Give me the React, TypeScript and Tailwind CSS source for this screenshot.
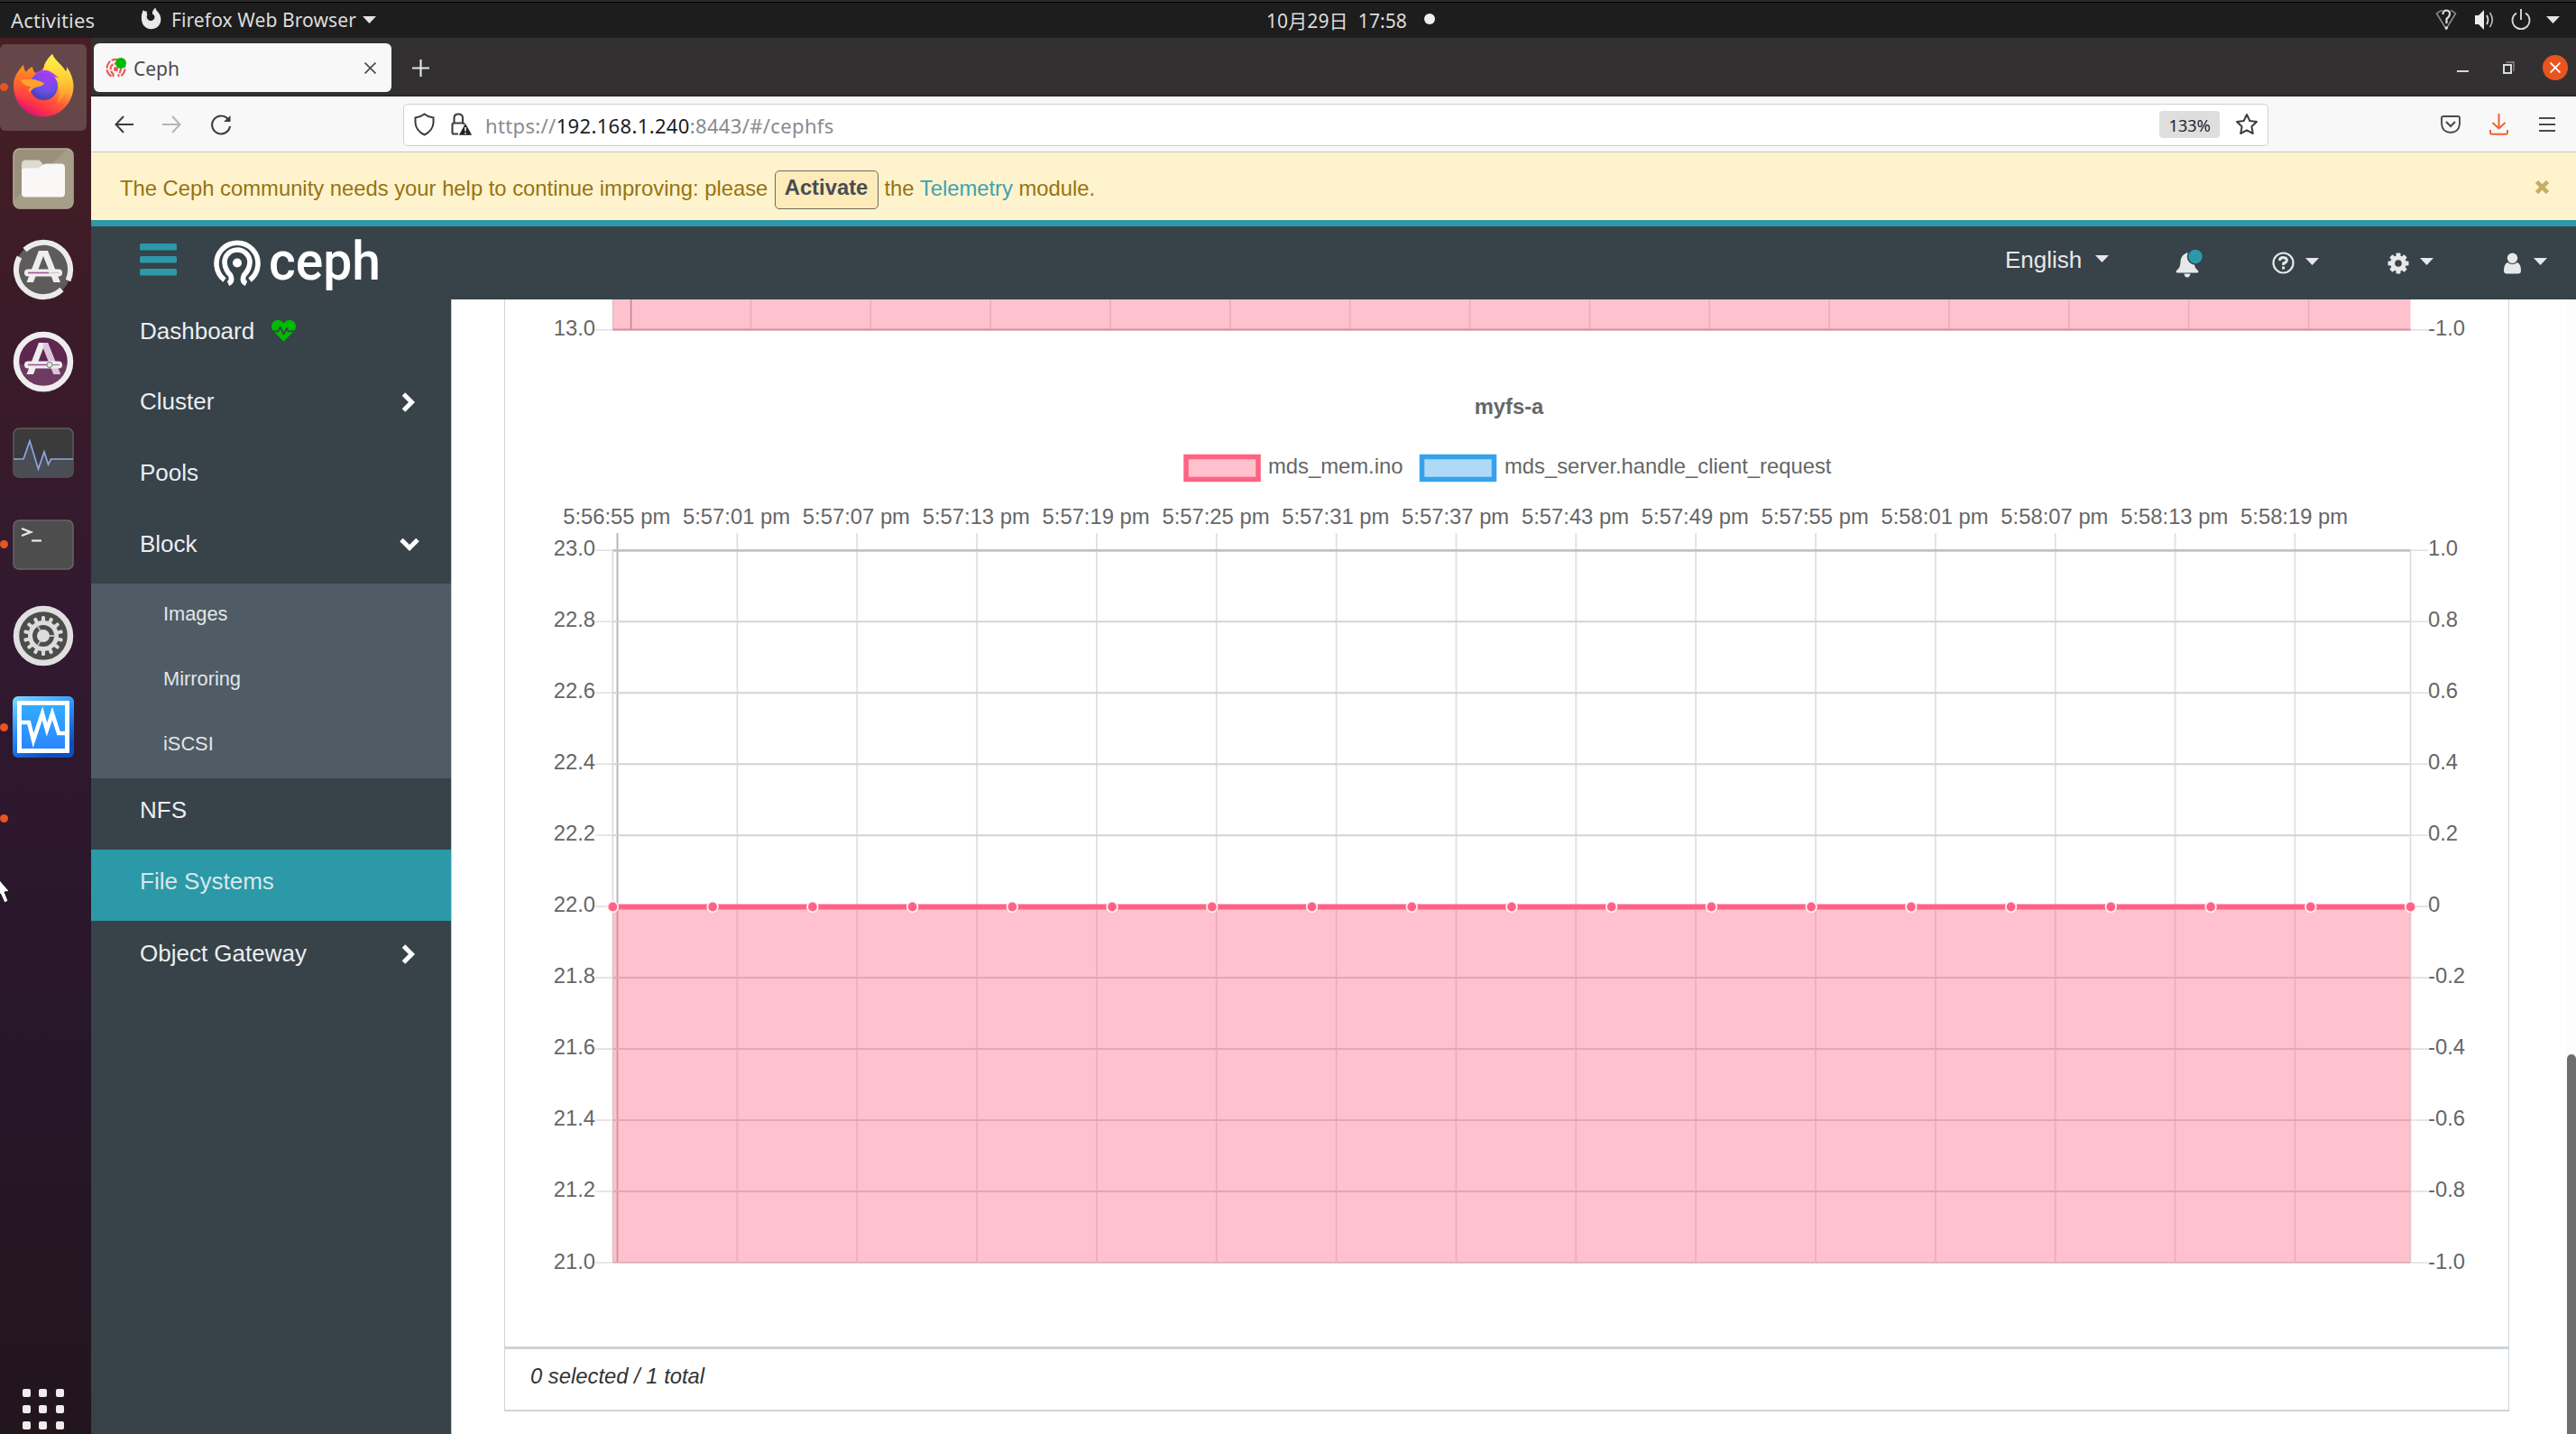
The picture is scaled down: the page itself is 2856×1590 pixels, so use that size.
import React from "react";
import { FaHeartbeat } from "react-icons/fa";

const UI = "font-['Noto_Sans','Noto_Sans_CJK_SC',sans-serif]";

function Caret({ className = "" }: { className?: string }) {
  return (
    <svg className={"shrink-0 " + className} width="15" height="8" viewBox="0 0 15 8">
      <path d="M0 0H15L7.5 8Z" fill="currentColor" />
    </svg>
  );
}

function TopBar() {
  return (
    <div className={"flex h-[42px] shrink-0 items-center border-t-2 border-[#2b2b2d] bg-[#1d1d1d] text-[21px] leading-none text-[#dcdcdc] shadow-[inset_0_1px_0_#000] " + UI}>
      <span className="ml-[12px] w-[143px] shrink-0 whitespace-nowrap text-[22px] tracking-[0.15px]">Activities</span>
      <svg className="mb-0.5 shrink-0" width="26" height="26" viewBox="0 0 26 26">
        <path d="M4 3C5 5 6.500 4.500 8 4.500C7.500 6 7.500 7 8.500 8C7 9.500 7.500 13 10 14.500C13 16 16.500 14 16.500 11C16.500 9 15 8 14 7.500C13.500 5 15 2 17.500 0.500C17.500 3 19 4 21 6.500C24.500 11 24 18 20 21.500C15.500 25.500 8 25 4.500 20.500C1 16 1 8 4 3Z" fill="#e9e9e9" />
      </svg>
      <span className="ml-[9px] w-[214px] shrink-0 whitespace-nowrap tracking-[0.1px]">Firefox Web Browser</span>
      <Caret className="-ml-0.5 mr-0.5 text-[#e4e4e4]" />
      <span className="ml-[985px] w-[175px] shrink-0 whitespace-pre pt-[3px] tracking-[0.1px]">10月29日  17:58</span>
      <span className="mb-0.5 size-[12px] shrink-0 rounded-full bg-[#efefef]" />
      <div className="ml-auto mr-[18px] flex items-center">
        <svg width="24" height="28" viewBox="0 0 24 28" fill="none" stroke="#8b8b8b" strokeWidth="1.6">
          <path d="M8 3.500Q4 4.500 1.500 7L12 24L22.500 7Q20 4.500 17 3.500" />
          <path d="M8.500 8Q8.500 3.500 12.500 3.500Q16.500 4 16 8Q15.500 11 12.500 13V18" stroke="#dedede" strokeWidth="2.200" />
          <circle cx="12.300" cy="23" r="1.700" fill="#dedede" stroke="none" />
        </svg>
        <svg className="ml-[19px]" width="24" height="28" viewBox="0 0 24 28" fill="none" stroke="#bdbdbd" strokeWidth="1.6">
          <path d="M1 9H5L11 3V25L5 19H1Z" fill="#ececec" stroke="none" />
          <path d="M14 9Q17 14 14 19" stroke="#ececec" />
          <path d="M17.500 6Q23 14 17.500 22" />
        </svg>
        <svg className="ml-[16px]" width="24" height="28" viewBox="0 0 24 28" fill="none" stroke="#d6d6d6" strokeWidth="1.900">
          <path d="M7 6.500A9.500 9.500 0 1 0 17 6.500M12 2V14" />
        </svg>
        <Caret className="ml-[16px] text-[#e4e4e4]" />
      </div>
    </div>
  );
}

function FirefoxIcon() {
  return (
    <svg className="-mt-1" width="70" height="72" viewBox="0 0 70 72">
      <defs>
        <linearGradient id="ffBody" x1="0.8" y1="0.1" x2="0.3" y2="1">
          <stop offset="0" stopColor="#fff04a" />
          <stop offset="0.35" stopColor="#ffb02e" />
          <stop offset="0.6" stopColor="#ff5a3a" />
          <stop offset="0.8" stopColor="#ff3347" />
          <stop offset="1" stopColor="#d8107c" />
        </linearGradient>
        <linearGradient id="ffLeft" x1="0.4" y1="0" x2="0.4" y2="1">
          <stop offset="0" stopColor="#ff9a1f" />
          <stop offset="0.5" stopColor="#ff5b33" />
          <stop offset="1" stopColor="#ff3347" stopOpacity="0" />
        </linearGradient>
        <linearGradient id="ffTail" x1="0.5" y1="0" x2="0.5" y2="1">
          <stop offset="0" stopColor="#fff44f" />
          <stop offset="0.5" stopColor="#ffcf35" />
          <stop offset="1" stopColor="#ff8a2a" />
        </linearGradient>
        <radialGradient id="ffGlobe" cx="0.6" cy="0.2" r="0.9">
          <stop offset="0" stopColor="#a13df0" />
          <stop offset="0.55" stopColor="#6a4fe8" />
          <stop offset="1" stopColor="#3b3a9c" />
        </radialGradient>
      </defs>
      <path d="M2 36C2 26 7 20 13 13C13 17 14 19 16 21C18 18 21 16 23 15C23 18 24 20 26 22C34 20 36 17 36 13C38 8 42 4 45 1C47 7 53 11 58 17L60 20C61 19 61 17 61 15C66 22 68.500 30 68.500 37C68 56 53 70.500 35 70.500C16 70.500 2 55 2 36Z" fill="url(#ffBody)" />
      <path d="M2 36C2 26 7 20 13 13C13 17 14 19 16 21C18 18 21 16 23 15C23 18 24 20 26 22L30 24L24 60C10 56 2 48 2 36Z" fill="url(#ffLeft)" />
      <path d="M34 21C36 14 39 6 45 1C47 8 58 13 60 24C63 34 61 48 50 56C56 46 53 33 46 26C42 22 39 21 34 21Z" fill="url(#ffTail)" />
      <circle cx="35.500" cy="36.500" r="15.500" fill="url(#ffGlobe)" />
      <path d="M25 24C28 20 35 17 42 20C46 22 50 25 52 28C47 25 43 27 42 24C37 20 31 23 25 24Z" fill="#b13df2" />
      <path d="M10 30C15 28 19 29 23 29C27 29 30 31 36 33C35 37 29 37 26 38C23 40 21 41 20 44C18 41 19 39 21 37C16 37 12 34 10 30Z" fill="#ffa22b" />
    </svg>
  );
}

function FilesIcon() {
  return (
    <svg width="68" height="68" viewBox="0 0 68 68">
      <rect x="1" y="1" width="66" height="66" rx="7" fill="#9a917c" stroke="#b5ad98" strokeWidth="1.500" />
      <path d="M1 58L60 2Q67 2 67 8V60Q67 67 60 67H8Q1 67 1 58Z" fill="#a79e8a" />
      <path d="M10 18Q10 13.500 14.500 13.500H28Q31 13.500 33 18V30H10Z" fill="#dedacf" />
      <path d="M10 25Q10 22.500 14 22.500H27Q30 22 32 20Q33.500 17.500 37 17.500H54Q58 17.500 58 22V50Q58 54.500 54 54.500H14Q10 54.500 10 50Z" fill="#f9f8f6" />
    </svg>
  );
}

function AppCircle({ update }: { update?: boolean }) {
  return (
    <svg width="68" height="68" viewBox="0 0 68 68">
      <circle cx="34" cy="34" r={update ? 31 : 33} fill={update ? "#5d5b5c" : "#5f2650"} />
      {!update && <path d="M3 37H65A31 31 0 0 1 3 37Z" fill="#6f3a62" />}
      {update ? (
        <g fill="none" stroke="#ebebeb" strokeWidth="6">
          <path d="M13.500 12A30 30 0 0 1 61.500 46" />
          <path d="M54.500 56A30 30 0 0 1 7.500 20" />
        </g>
      ) : (
        <circle cx="34" cy="34" r="30" fill="none" stroke="#efeeee" strokeWidth="6.500" />
      )}
      <path d="M29 13H39L53 48H45.500L34 19L23 48H15.500Z" fill="#efeeee" />
      {!update && <path d="M34 13H39L53 48H45.500L34 19Z" fill="#dcc3dc" />}
      <rect x="13" y="33.500" width="42" height="8" rx="4" fill="#efeeee" />
      <path d="M17 37.500H40" stroke="#a34f9a" strokeWidth="1.600" />
      <path d="M40 37.500H52" stroke={update ? "#c9c9c9" : "#8a8a8a"} strokeWidth="1.200" />
      {!update && <circle cx="41" cy="37.500" r="3" fill="#e6e6e6" stroke="#777" strokeWidth="1" />}
    </svg>
  );
}

function MonitorIcon() {
  return (
    <svg width="68" height="56" viewBox="0 0 68 56">
      <rect x="1" y="1" width="66" height="54" rx="6" fill="#3b3b3b" stroke="#5c5c5c" strokeWidth="1.500" />
      <path d="M1 35H12L19 15L28.500 46L35 27L39.500 41L42.500 35H67V49Q67 55 61 55H7Q1 55 1 49Z" fill="#4b4d55" />
      <path d="M1 35H12L19 15L28.500 46L35 27L39.500 41L42.500 35H67" fill="none" stroke="#8ea6e2" strokeWidth="1.700" />
    </svg>
  );
}

function TerminalIcon() {
  return (
    <svg width="68" height="56" viewBox="0 0 68 56">
      <rect x="1" y="1" width="66" height="54" rx="6" fill="#4d4d4d" stroke="#666" strokeWidth="1.500" />
      <path d="M10 10L20 14L10 18" fill="none" stroke="#e8e8e8" strokeWidth="2.400" />
      <path d="M21 23.500H32" stroke="#e8e8e8" strokeWidth="2.200" />
    </svg>
  );
}

function SettingsIcon() {
  const teeth = Array.from({ length: 14 }, (_, i) => i * (360 / 14));
  return (
    <svg width="68" height="68" viewBox="0 0 68 68">
      <circle cx="34" cy="34" r="30" fill="#4c4c4b" stroke="#e0e0e0" strokeWidth="6.500" />
      {teeth.map((a) => (
        <rect key={a} x="32" y="12" width="4" height="6" rx="1.500" fill="#dcdcdc" transform={`rotate(${a} 34 34)`} />
      ))}
      <circle cx="34" cy="34" r="14.500" fill="none" stroke="#dcdcdc" strokeWidth="5" />
      <path d="M34 34H47M34 34L27.500 22.700M34 34L27.500 45.300" stroke="#bdbdbd" strokeWidth="1.800" />
      <circle cx="34" cy="34" r="7" fill="#dcdcdc" />
    </svg>
  );
}

function VmIcon() {
  return (
    <svg width="70" height="70" viewBox="0 0 70 70">
      <defs>
        <linearGradient id="vmBorder" x1="0" y1="0" x2="0.5" y2="1">
          <stop offset="0" stopColor="#7fdcff" />
          <stop offset="0.5" stopColor="#2a92ff" />
          <stop offset="1" stopColor="#0b4fc0" />
        </linearGradient>
        <linearGradient id="vmFill" x1="0" y1="0" x2="0" y2="1">
          <stop offset="0" stopColor="#30adff" />
          <stop offset="1" stopColor="#2a84ff" />
        </linearGradient>
      </defs>
      <rect x="1" y="1" width="68" height="68" rx="6" fill="url(#vmBorder)" />
      <rect x="8.500" y="8.500" width="53" height="53" fill="url(#vmFill)" stroke="#fff" strokeWidth="5" />
      <path d="M10 30H19L24 50L34 20L39 38L45 20L52 42H60" fill="none" stroke="#fff" strokeWidth="4.500" />
    </svg>
  );
}

const DOCK: { icon: React.ReactNode; dot?: boolean; active?: boolean }[] = [
  { icon: <FirefoxIcon />, dot: true, active: true },
  { icon: <FilesIcon /> },
  { icon: <AppCircle update /> },
  { icon: <AppCircle /> },
  { icon: <MonitorIcon /> },
  { icon: <TerminalIcon />, dot: true },
  { icon: <SettingsIcon /> },
  { icon: <VmIcon />, dot: true },
  { icon: null, dot: true },
];

function Dock() {
  return (
    <div className="relative flex w-[101px] shrink-0 flex-col bg-[linear-gradient(#471f25,#3c1b27_18%,#321930_42%,#28162a_70%,#22151e)] pt-[4px]">
      {DOCK.map((d, i) => (
        <div key={i} className="flex h-[101.4px] shrink-0 items-center">
          <div className={"relative flex h-[96px] w-[95.5px] items-center justify-center rounded-[6px] " + (d.active ? "bg-[#65474a]" : "")}>
            {d.dot && <span className="absolute left-0 top-[43.500px] size-[9px] rounded-full bg-[#e95420]" />}
            {d.icon}
          </div>
        </div>
      ))}
      <div className="mb-[5px] ml-[25px] mt-auto grid w-[46px] grid-cols-3 gap-[9px]">
        {Array.from({ length: 9 }, (_, i) => (
          <span key={i} className="size-[9px] rounded-[2px] bg-[#efedec]" />
        ))}
      </div>
      <svg className="absolute left-0 top-[933px]" width="14" height="30" viewBox="0 0 14 30">
        <path d="M-8 -8L10.500 13.500L5 14L9 24L5 26L0.500 16L-4 19Z" fill="#fff" stroke="#111" strokeWidth="1" />
      </svg>
    </div>
  );
}

function TabStrip() {
  return (
    <div className={"flex h-[65px] shrink-0 items-center border-b-2 border-[#2a2829] bg-[#333031] " + UI}>
      <div className="ml-[3px] mt-[3px] flex h-[54px] w-[330px] shrink-0 items-center rounded-[6px] bg-[#f8f8f8]">
        <svg className="ml-[13px]" width="23" height="23" viewBox="0 0 23 23" fill="none" stroke="#ee5a57" strokeWidth="2.200">
          <path d="M6.500 20.500A10 10 0 1 1 16.500 20.500" strokeDasharray="9 1.500" />
          <path d="M8.500 21V18Q4.500 14.500 6 10Q8 6 12 6.500Q17.500 8 17 12.500Q16.500 16 14.500 18V21" strokeDasharray="7 1.500" />
          <circle cx="11.500" cy="12.500" r="1.500" fill="#ee5a57" />
          <circle cx="17" cy="6" r="6" fill="#00bb00" stroke="none" />
        </svg>
        <span className="ml-[8px] pt-[2px] text-[21px] leading-none text-[#4a4a4a]">Ceph</span>
        <svg className="ml-auto mr-[17px]" width="13" height="13" viewBox="0 0 12 12" stroke="#4a4a4a" strokeWidth="1.500">
          <path d="M0.500 0.500L11.500 11.500M11.500 0.500L0.500 11.500" />
        </svg>
      </div>
      <svg className="ml-[23px] mt-[3px]" width="19" height="19" viewBox="0 0 18 18" stroke="#e6e6e6" strokeWidth="2">
        <path d="M0 9H18M9 0V18" />
      </svg>
      <div className="ml-auto mr-[9px] mt-[2px] flex items-center">
        <span className="mt-[8px] h-[2px] w-[13px] bg-[#d8d8d8]" />
        <svg className="ml-[38px]" width="13" height="14" viewBox="0 0 13 14" fill="none">
          <path d="M3.500 1H12V11" stroke="#8d8d8d" strokeWidth="1.300" />
          <rect x="1" y="4" width="8" height="9" stroke="#e4e4e4" strokeWidth="1.900" />
        </svg>
        <span className="ml-[31px] flex size-[28px] items-center justify-center rounded-full bg-[#e95420]">
          <svg width="12" height="12" viewBox="0 0 12 12" stroke="#fff" strokeWidth="1.900">
            <path d="M0.500 0.500L11.500 11.500M11.500 0.500L0.500 11.500" />
          </svg>
        </span>
      </div>
    </div>
  );
}

function Toolbar() {
  return (
    <div className={"flex h-[62px] shrink-0 items-center border-b-[1.500px] border-[#c6c6c8] bg-[#f8f8f8] pt-px " + UI}>
      <svg className="ml-[26px] shrink-0" width="21" height="20" viewBox="0 0 21 20" fill="none" stroke="#3d3d3d" strokeWidth="2">
        <path d="M21 10H1.500M10 1L1.500 10L10 19" />
      </svg>
      <svg className="ml-[32px] shrink-0" width="21" height="20" viewBox="0 0 21 20" fill="none" stroke="#b4b4b4" strokeWidth="2">
        <path d="M0 10H19.500M11 1L19.500 10L11 19" />
      </svg>
      <svg className="ml-[33px] shrink-0" width="23" height="23" viewBox="0 0 23 23" fill="none" stroke="#3d3d3d" strokeWidth="2.100">
        <path d="M19.500 6A10 10 0 1 0 21 13" />
        <path d="M21.500 1V8H14Z" fill="#3d3d3d" stroke="none" />
      </svg>
      <div className="ml-[190px] flex h-[47px] w-[2068px] shrink-0 items-center rounded-[5px] border-[1.500px] border-[#cfcfd1] bg-white">
        <svg className="ml-[11px] shrink-0" width="23" height="26" viewBox="0 0 23 26" fill="none" stroke="#3d3d3d" strokeWidth="2">
          <path d="M11.500 1.500Q16 5 21.500 5.500V11Q21 20 11.500 24.500Q2 20 1.500 11V5.500Q7 5 11.500 1.500Z" />
        </svg>
        <svg className="ml-[17px] shrink-0" width="25" height="26" viewBox="0 0 25 26" fill="none" stroke="#3d3d3d" strokeWidth="2.100">
          <path d="M9 23.500H4Q2.500 23.500 2.500 22V13.500Q2.500 11.500 4 11.500H14Q16 11.500 16 13.500M4.500 11V6Q4.500 1.500 9.200 1.500Q14 1.500 14 6V11" />
          <path d="M17 11.500L24.500 25H9.500Z" fill="#222" stroke="#fff" strokeWidth="0.500" />
          <path d="M17 16V20.500M17 22V23.500" stroke="#fff" strokeWidth="1.600" />
        </svg>
        <span className="ml-[14px] whitespace-nowrap pt-px text-[22px] leading-none tracking-[0.350px] text-[#8a8a90]">
          https://<span className="text-[#1b1b1f]">192.168.1.240</span>:8443/#/cephfs
        </span>
        <span className="ml-auto flex h-[30px] w-[67px] items-center justify-center rounded-[4px] bg-[#dedede] pt-px text-[18.500px] tracking-[-0.300px] text-[#26262a]">133%</span>
        <svg className="ml-[17px] mr-[10px] shrink-0" width="26" height="26" viewBox="0 0 26 26" fill="none" stroke="#3d3d3d" strokeWidth="2" strokeLinejoin="round">
          <path d="M13 2L16.300 9L24 10L18.400 15.300L19.800 23L13 19.300L6.200 23L7.600 15.300L2 10L9.700 9Z" />
        </svg>
      </div>
      <svg className="ml-[191px] shrink-0" width="22" height="20" viewBox="0 0 22 20" fill="none" stroke="#4a4a4a" strokeWidth="1.900">
        <path d="M3 1H19Q21 1 21 3V9Q20.500 18.500 11 19Q1.500 18.500 1 9V3Q1 1 3 1Z" />
        <path d="M6 7L11 12L16 7" strokeWidth="2.200" />
      </svg>
      <svg className="ml-[32px] shrink-0" width="21" height="24" viewBox="0 0 21 24" fill="none" stroke="#ee6232" strokeWidth="2">
        <path d="M10.500 0V16M3.500 10L10.500 16.500L17.500 10M1 18V21Q1 22.800 3 22.800H18Q20 22.800 20 21V18" />
      </svg>
      <svg className="ml-[34px] shrink-0" width="18" height="16" viewBox="0 0 18 16" stroke="#4a4a4a" strokeWidth="1.900">
        <path d="M0 1H18M0 8H18M0 15H18" />
      </svg>
    </div>
  );
}

function Banner() {
  return (
    <div className="flex h-[75px] shrink-0 items-center bg-[#fff3cd] pt-[5px] text-[23.800px] leading-none text-[#967311]">
      <span className="ml-[32px] w-[725.500px] shrink-0 whitespace-nowrap">The Ceph community needs your help to continue improving: please</span>
      <span className="mt-[2px] flex h-[43px] w-[115px] shrink-0 items-center justify-center rounded-[5px] border-[1.500px] border-[#6f6a60] bg-[#fdebba] pb-[4px] font-bold text-[#474c53]">Activate</span>
      <span className="ml-[7px] whitespace-nowrap">
        the <span className="text-[#3ba3b2]">Telemetry</span> module.
      </span>
      <svg className="mb-[3px] ml-auto mr-[30px]" width="15" height="15" viewBox="0 0 15 15" stroke="#c4ae66" strokeWidth="4.500">
        <path d="M1.500 1.500L13.500 13.500M13.500 1.500L1.500 13.500" />
      </svg>
    </div>
  );
}

function CephLogo() {
  return (
    <svg className="ml-[41px] shrink-0 overflow-visible" width="186" height="56" viewBox="0 0 186 56">
      <g fill="none" stroke="#fff" strokeWidth="5.600">
        <path d="M12 46.500A23 23 0 1 1 40 46.500" />
        <path d="M16 50.500Q21.500 48 18.500 41Q12.500 35 12 27A14 14 0 0 1 40 27Q39.500 35 33.500 41Q30.500 48 36 50.500" />
      </g>
      <circle cx="26" cy="27.500" r="5" fill="#fff" />
      <text x="61" y="45.500" fontFamily="Roboto, sans-serif" fontSize="59" fontWeight="500" fill="#fff" textLength="124" lengthAdjust="spacingAndGlyphs">ceph</text>
    </svg>
  );
}

function Header() {
  return (
    <div className="flex h-[88px] shrink-0 items-center border-t-[7px] border-[#2b99a8] bg-[#374249] text-[#e6e8ea]">
      <svg className="mb-[7px] ml-[54px] shrink-0" width="41" height="36" viewBox="0 0 41 36" fill="#2b99a8">
        <rect y="0" width="41" height="7.500" rx="1.500" />
        <rect y="14" width="41" height="7.500" rx="1.500" />
        <rect y="28" width="41" height="7.500" rx="1.500" />
      </svg>
      <CephLogo />
      <div className="ml-auto mr-[32px] flex items-center">
        <span className="mb-[7px] w-[100px] text-[26px] leading-none">English</span>
        <Caret className="mb-[10px]" />
        <svg className="ml-[74px]" width="31" height="34" viewBox="0 0 31 34">
          <path d="M11.500 6Q12.500 4 14 6Q20 7.500 20.500 15Q20.500 22 25 25Q26 27.500 24 27.500H2Q0 27.500 1 25Q5.500 22 5.500 15Q6 8 11.500 6ZM9.500 28.500H16.500Q16 32.500 13 32.500Q10 32.500 9.500 28.500Z" fill="#e6e8ea" />
          <circle cx="22" cy="9.500" r="8.500" fill="#2b99a8" stroke="#374249" strokeWidth="1.500" />
        </svg>
        <svg className="ml-[76px]" width="25" height="25" viewBox="0 0 25 25" fill="none" stroke="#e6e8ea">
          <circle cx="12.500" cy="12.500" r="11" strokeWidth="2.200" />
          <path d="M8.500 10Q8.500 6.500 12.500 6.500Q16.500 7 16.300 9.700Q16 12 12.700 13V15" strokeWidth="3" />
          <path d="M12.600 16.500V19.500" strokeWidth="3" />
        </svg>
        <Caret className="mb-[4px] ml-[12px]" />
        <svg className="ml-[76px]" width="24" height="24" viewBox="0 0 24 24" fill="#e6e8ea">
          {[0, 45, 90, 135].map((a) => (
            <rect key={a} x="9.500" y="0.500" width="5" height="23" rx="1" transform={`rotate(${a} 12 12)`} />
          ))}
          <circle cx="12" cy="12" r="8.800" />
          <circle cx="12" cy="12" r="3.800" fill="#374249" />
        </svg>
        <Caret className="mb-[4px] ml-[12px]" />
        <svg className="ml-[78px]" width="19" height="24" viewBox="0 0 19 24" fill="#e6e8ea">
          <circle cx="9.500" cy="6.200" r="5.700" />
          <path d="M4 11Q9.500 15 15 11Q19 13 19 20Q19 23.500 15.500 23.500H3.500Q0 23.500 0 20Q0 13 4 11Z" />
        </svg>
        <Caret className="mb-[4px] ml-[14px]" />
      </div>
    </div>
  );
}

function Chevron({ down }: { down?: boolean }) {
  return (
    <svg className={"ml-auto mt-[2px] " + (down ? "mr-[35px]" : "mr-[39px]")} width={down ? 22 : 16} height={down ? 16 : 22} viewBox={down ? "0 0 22 16" : "0 0 16 22"} fill="none" stroke="#fff" strokeWidth="5">
      <path d={down ? "M2 2.500L11 11.500L20 2.500" : "M2.500 2L11.500 11L2.500 20"} />
    </svg>
  );
}

function MenuRow({ label, chevron, heart, active }: { label: string; chevron?: "right" | "down"; heart?: boolean; active?: boolean }) {
  return (
    <div className={"flex shrink-0 items-center pb-[8px] pl-[54px] text-[26px] leading-none " + (heart ? "h-[77.500px] " : "h-[79.100px] ") + (active ? "bg-[#2b99a8] text-[#d9e6e8]" : "text-[#eceeef]")}>
      <span>{label}</span>
      {heart && <FaHeartbeat className="ml-[19px] size-[27px] text-[#00bb00]" />}
      {chevron && <Chevron down={chevron === "down"} />}
    </div>
  );
}

function Sidebar() {
  return (
    <div className="flex w-[399px] shrink-0 flex-col bg-[#374249]">
      <MenuRow label="Dashboard" heart />
      <MenuRow label="Cluster" chevron="right" />
      <MenuRow label="Pools" />
      <MenuRow label="Block" chevron="down" />
      <div className="flex flex-col bg-[#4f5c66] text-[21.800px] leading-none text-[#e3e6e8]">
        {["Images", "Mirroring", "iSCSI"].map((t) => (
          <div key={t} className="flex h-[72px] items-center pb-[4px] pl-[80px]">{t}</div>
        ))}
      </div>
      <MenuRow label="NFS" />
      <MenuRow label="File Systems" active />
      <MenuRow label="Object Gateway" chevron="right" />
    </div>
  );
}

const TIMES = ["5:56:55", "5:57:01", "5:57:07", "5:57:13", "5:57:19", "5:57:25", "5:57:31", "5:57:37", "5:57:43", "5:57:49", "5:57:55", "5:58:01", "5:58:07", "5:58:13", "5:58:19"];
const LEFT = ["23.0", "22.8", "22.6", "22.4", "22.2", "22.0", "21.8", "21.6", "21.4", "21.2", "21.0"];
const RIGHT = ["1.0", "0.8", "0.6", "0.4", "0.2", "0", "-0.2", "-0.4", "-0.6", "-0.8", "-1.0"];
const X0 = 679.4;
const X1 = 2672.5;
const Y0 = 610.3;
const STEP = 78.97;

function Charts() {
  return (
    <svg className="block shrink-0" width="2220" height="1161" viewBox="560 332 2220 1161" fontFamily="'Liberation Sans', Arial, sans-serif" fontSize="23.800" fill="#666">
      <g strokeWidth="1.600">
        {TIMES.map((t, i) => (
          <path key={t} d={`M${699.6 + i * 132.85} 331V366`} stroke={i === 0 ? "#9c9c9c" : "#dedede"} />
        ))}
        <path d={`M${X0} 331V366M660 365.800H${X0}M${X1} 365.800H2692`} stroke="#dedede" />
        <path d={`M${X0} 365.500H${X1}`} stroke="#b0b0b0" strokeWidth="2" />
      </g>
      <rect x={X0} y="331" width={X1 - X0} height="35.500" fill="#ff6384" fillOpacity="0.400" />
      <text x="660" y="372.300" textAnchor="end">13.0</text>
      <text x="2692" y="372.300">-1.0</text>

      <text x="1673" y="458.500" textAnchor="middle" fontWeight="bold">myfs-a</text>
      <rect x="1315" y="506.500" width="80" height="25" fill="#ffc1ce" stroke="#ff6384" strokeWidth="5.500" />
      <text x="1406" y="525">mds_mem.ino</text>
      <rect x="1576.500" y="506.500" width="80" height="25" fill="#aedaf7" stroke="#36a2eb" strokeWidth="5.500" />
      <text x="1668" y="525">mds_server.handle_client_request</text>

      {TIMES.map((t, i) => (
        <g key={t}>
          <text x={683.7 + i * 132.85} y="581" textAnchor="middle">{t} pm</text>
          <path d={`M${684.5 + i * 132.85} 591V1400`} stroke={i === 0 ? "#b0b0b0" : "#e0e0e0"} strokeWidth="1.800" />
        </g>
      ))}
      {LEFT.map((t, i) => (
        <g key={t}>
          <text x="660" y={615.5 + i * 79.1} textAnchor="end">{t}</text>
          <text x="2692" y={615.5 + i * 79.1}>{RIGHT[i]}</text>
          <path d={`M660 ${Y0 + i * STEP}H${X0}M${X1} ${Y0 + i * STEP}H2692`} stroke="#e0e0e0" strokeWidth="1.600" />
          <path d={`M${X0} ${Y0 + i * STEP}H${X1}`} stroke={i === 0 ? "#c2c2c2" : "#d3d3d3"} strokeWidth={i === 0 ? 2.8 : 2} />
        </g>
      ))}
      <path d={`M${X0} ${Y0}V1400M${X1} ${Y0}V1400`} stroke="#dcdcdc" strokeWidth="1.600" />
      <rect x={X0} y="1005.500" width={X1 - X0} height="394.700" fill="#ff6384" fillOpacity="0.400" />
      <path d={`M${X0} 1005.500H${X1}`} stroke="#ff6384" strokeWidth="5.800" />
      {Array.from({ length: 19 }, (_, i) => (
        <circle key={i} cx={X0 + i * 110.73} cy="1005.500" r="5.800" fill="#ff6384" stroke="#fff0f3" strokeWidth="1.800" />
      ))}
    </svg>
  );
}

function Content() {
  return (
    <div className="flex min-w-0 flex-1 border-l border-[#c9cdcf] bg-white">
      <div className="ml-[58px] flex h-[1233px] w-[2223px] shrink-0 flex-col border-x-[1.500px] border-b-2 border-[#ced4da]">
        <Charts />
        <div className="flex flex-1 items-center border-t-[3px] border-[#ced4da] pb-[7px] pl-[28px] text-[23.800px] italic leading-none text-[#333]">
          0 selected / 1 total
        </div>
      </div>
      <div className="ml-auto flex w-[10px] shrink-0 flex-col justify-end bg-[#fcfcfc]">
        <div className="h-[421px] rounded-t-[5px] bg-[#6e6e6e]" />
      </div>
    </div>
  );
}

export default function App() {
  return (
    <div className="flex h-[1590px] w-[2856px] flex-col overflow-hidden bg-white font-['Liberation_Sans',Arial,sans-serif]">
      <TopBar />
      <div className="flex min-h-0 flex-1">
        <Dock />
        <div className="flex min-w-0 flex-1 flex-col">
          <TabStrip />
          <Toolbar />
          <Banner />
          <Header />
          <div className="flex min-h-0 flex-1">
            <Sidebar />
            <Content />
          </div>
        </div>
      </div>
    </div>
  );
}
